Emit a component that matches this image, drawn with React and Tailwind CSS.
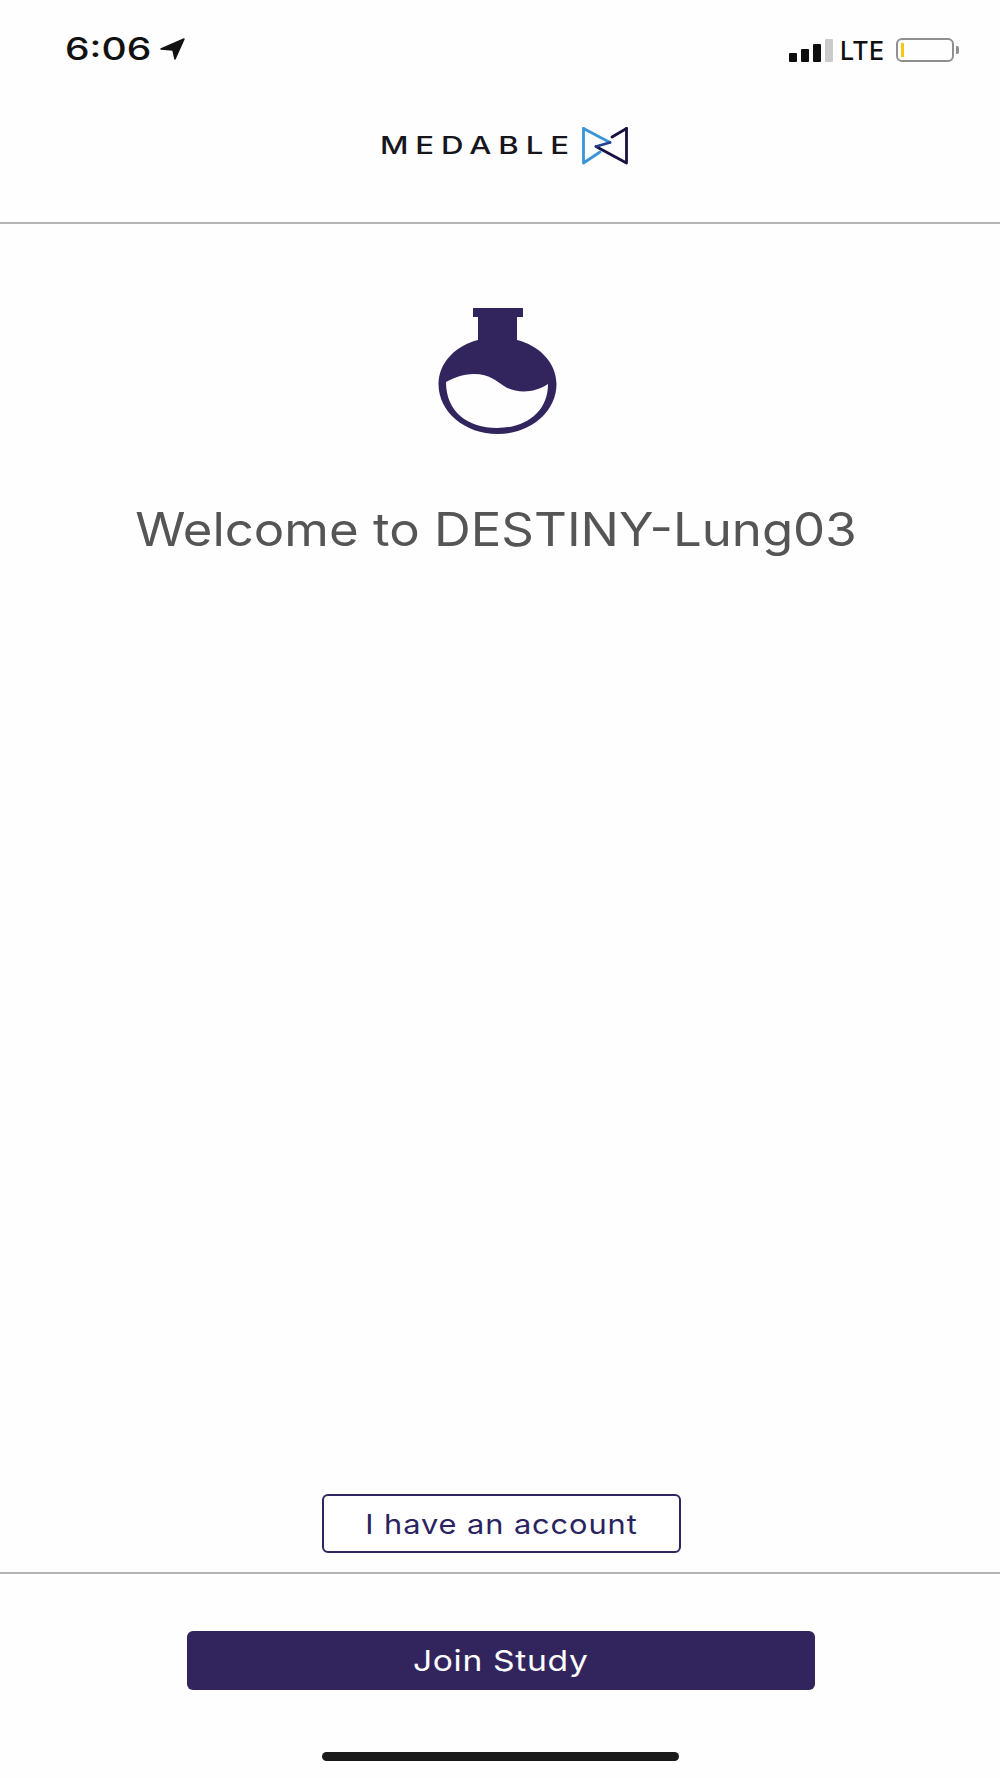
export default function App() {
  return (
    <div className="flex h-[1778px] w-[1000px] flex-col overflow-hidden bg-[#fefefe] font-['Inter',sans-serif]">
      <header className="flex h-[222px] flex-col">
        <div className="flex items-start justify-between pl-[65px] pr-[41px] pt-[37px]">
          <div className="flex items-center gap-[8px]">
            <span className="w-[87px] origin-left scale-x-[1.26] text-[31px] leading-[24px] font-medium text-[#111]">6:06</span>
            <svg width="26" height="22" viewBox="0 0 26 22">
              <path d="M1 11 L24 1 L15 21 L13 12 Z" fill="#111" stroke="#111" strokeWidth="1.5" strokeLinejoin="round" />
            </svg>
          </div>
          <div className="flex items-center gap-[7px]">
            <div className="flex h-[24px] items-end gap-[4px]">
              <i className="block h-[9px] w-[8px] rounded-[1px] bg-[#0d0d0d]" />
              <i className="block h-[13px] w-[8px] rounded-[1px] bg-[#0d0d0d]" />
              <i className="block h-[18px] w-[8px] rounded-[1px] bg-[#0d0d0d]" />
              <i className="block h-[23px] w-[8px] rounded-[1px] bg-[#cbcbcb]" />
            </div>
            <span className="w-[47px] pt-[2px] text-[25px] leading-[24px] font-medium tracking-[0.5px] text-[#111]">LTE</span>
            <div className="ml-[2px] flex items-center gap-[2px]">
              <div className="flex h-[24px] w-[58px] items-center rounded-[6px] border-2 border-[#8f8f8f] pl-[3px]">
                <i className="block h-[14px] w-[3px] bg-[#f5c518]" />
              </div>
              <i className="block h-[8px] w-[3px] rounded-r-[2px] bg-[#8f8f8f]" />
            </div>
          </div>
        </div>
        <div className="mt-[64px] flex items-center pl-[380px]">
          <span className="w-[202px] origin-left scale-x-[1.3] text-[24px] leading-[24px] font-medium tracking-[5.3px] text-[#16161c]">MEDABLE</span>
          <svg width="46" height="38" viewBox="0 0 46 38" fill="none" strokeWidth="2.8" strokeLinejoin="round" strokeLinecap="round">
            <path d="M1.5 1.5 V36 L18 25" stroke="#3a94d8" />
            <path d="M1.5 1.5 L28 15.5" stroke="#3a94d8" />
            <path d="M44.5 1.5 V36 L14 19.5" stroke="#17123f" />
            <path d="M44.5 1.5 L30 10" stroke="#17123f" />
            <path d="M28 15.5 L14 19.5" stroke="#2a3f8f" />
          </svg>
        </div>
      </header>
      <div className="h-[2px] bg-[#b3b3b3]" />
      <main className="flex flex-1 flex-col items-center">
        <svg className="mt-[84px] mr-[5px]" width="119" height="127" viewBox="0 0 119 127">
          <path fillRule="evenodd" fill="#32255e" d="M35 0 H85 V9 H79 V32 C100 37 118.5 54 118.5 76 C118.5 104 92 126 59.5 126 C27 126 0.5 104 0.5 76 C0.5 54 19 37 40 32 V9 H35 Z M8 74 C16 70 24 66 36 66 C52 66 58 73 66 78 C76 85 96 86 110 76 C110 104 88 120 59 120 C30 120 8 104 8 74 Z" />
        </svg>
        <h1 className="mt-[66px] mr-[8px] scale-x-[1.107] text-[46px] leading-[56px] font-normal text-[#555555]">Welcome to DESTINY-Lung03</h1>
        <div className="flex-1" />
        <button className="mb-[19px] ml-[2px] flex h-[59px] w-[359px] items-center justify-center rounded-[6px] border-2 border-[#2d2660] bg-white pt-[3px] text-[27px] tracking-[0.03em] text-[#2a2360]">
          <span className="scale-x-[1.14]">I have an account</span>
        </button>
      </main>
      <div className="h-[2px] bg-[#b3b3b3]" />
      <footer className="flex h-[204px] flex-col items-center pt-[57px]">
        <button className="ml-[2px] flex h-[59px] w-[628px] items-center justify-center rounded-[6px] bg-[#32255e] text-[29px] tracking-[0.02em] text-white">
          <span className="scale-x-[1.16]">Join Study</span>
        </button>
        <div className="mt-[62px] h-[9px] w-[357px] rounded-full bg-[#1a1a1a]" />
      </footer>
    </div>
  );
}
